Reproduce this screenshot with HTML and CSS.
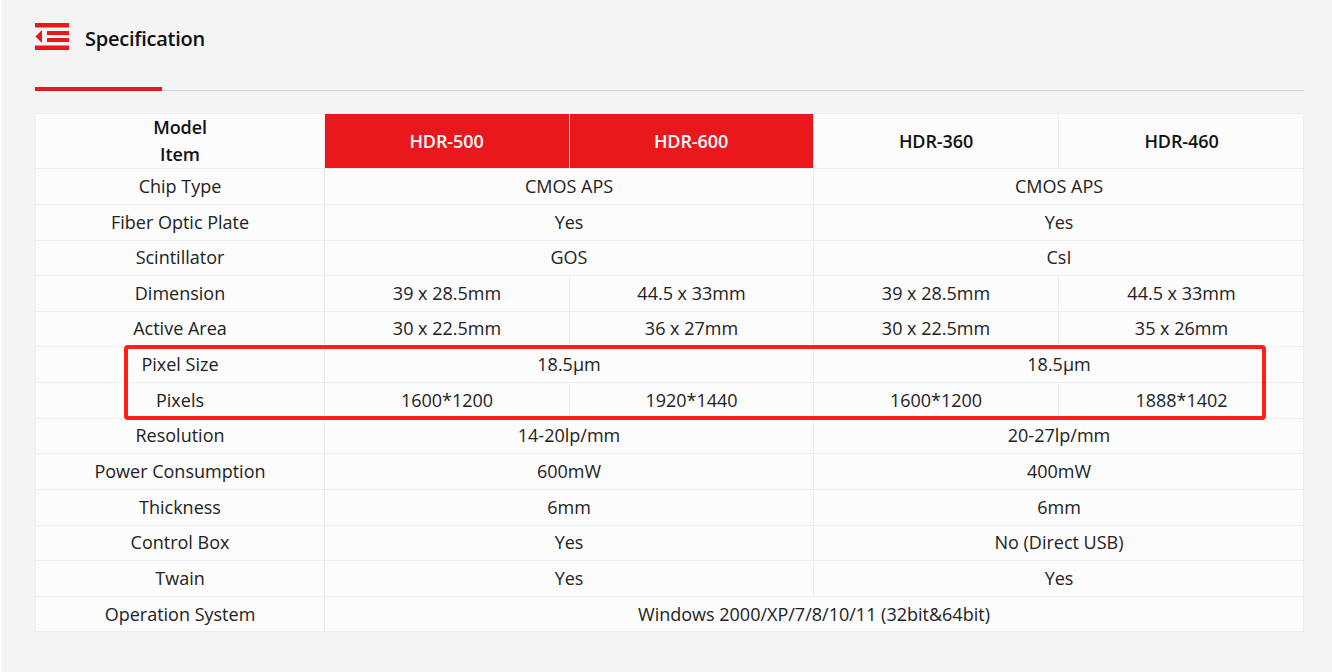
FILE: index.html
```html
<!DOCTYPE html>
<html lang="en">
<head>
<meta charset="utf-8">
<title>Specification</title>
<link rel="stylesheet" href="styles.css">
</head>
<body>
<main class="page">
  <header class="title">
    <svg class="title-icon" width="34" height="27" viewBox="0 0 34 27" aria-hidden="true">
      <rect x="0" y="0" width="34" height="4.5" fill="#ea171c"/>
      <rect x="12" y="8" width="22" height="4" fill="#ea171c"/>
      <rect x="12" y="15" width="22" height="4" fill="#ea171c"/>
      <rect x="0" y="22.5" width="34" height="4.5" fill="#ea171c"/>
      <path d="M0.5 13.5 7 7V20Z" fill="#ea171c"/>
    </svg>
    <h2 class="title-text">Specification</h2>
  </header>
  <div class="rule"><span class="rule-accent"></span></div>
  <div class="table-wrap">
    <table class="spec">
      <colgroup><col class="c0"><col class="c1"><col class="c2"><col class="c3"><col class="c4"></colgroup>
      <tr class="head">
        <th>Model<br>Item</th>
        <th class="hot">HDR-500</th>
        <th class="hot">HDR-600</th>
        <th>HDR-360</th>
        <th>HDR-460</th>
      </tr>
      <tr><td>Chip Type</td><td colspan="2">CMOS APS</td><td colspan="2">CMOS APS</td></tr>
      <tr><td>Fiber Optic Plate</td><td colspan="2">Yes</td><td colspan="2">Yes</td></tr>
      <tr class="short"><td>Scintillator</td><td colspan="2">GOS</td><td colspan="2">CsI</td></tr>
      <tr><td>Dimension</td><td>39 x 28.5mm</td><td>44.5 x 33mm</td><td>39 x 28.5mm</td><td>44.5 x 33mm</td></tr>
      <tr class="short"><td>Active Area</td><td>30 x 22.5mm</td><td>36 x 27mm</td><td>30 x 22.5mm</td><td>35 x 26mm</td></tr>
      <tr><td>Pixel Size</td><td colspan="2">18.5μm</td><td colspan="2">18.5μm</td></tr>
      <tr><td>Pixels</td><td>1600*1200</td><td>1920*1440</td><td>1600*1200</td><td>1888*1402</td></tr>
      <tr class="short"><td>Resolution</td><td colspan="2">14-20lp/mm</td><td colspan="2">20-27lp/mm</td></tr>
      <tr><td>Power Consumption</td><td colspan="2">600mW</td><td colspan="2">400mW</td></tr>
      <tr><td>Thickness</td><td colspan="2">6mm</td><td colspan="2">6mm</td></tr>
      <tr class="short"><td>Control Box</td><td colspan="2">Yes</td><td colspan="2">No (Direct USB)</td></tr>
      <tr><td>Twain</td><td colspan="2">Yes</td><td colspan="2">Yes</td></tr>
      <tr class="last"><td>Operation System</td><td colspan="4">Windows 2000/XP/7/8/10/11 (32bit&amp;64bit)</td></tr>
    </table>
    <div class="callout"></div>
  </div>
</main>
</body>
</html>
```
FILE: styles.css
```css
* { box-sizing: border-box; }
html, body { margin: 0; height: 100%; }
body {
  background: #fff;
  font-family: "Open Sans", "Noto Sans", sans-serif;
  color: #222;
  overflow: hidden;
}
.page {
  margin-left: 1px;
  height: 672px;
  background: #f4f4f4;
  padding: 23px 28px 0 34px;
}
.title {
  display: flex;
  align-items: flex-start;
  height: 67px;
}
.title-icon { flex: none; }
.title-text {
  margin: 0 0 0 16px;
  font-size: 20px;
  font-weight: 600;
  letter-spacing: -0.25px;
  line-height: 32px;
  color: #111;
}
.rule {
  height: 1px;
  background: #cfcfcf;
  position: relative;
}
.rule-accent {
  position: absolute;
  left: 0;
  bottom: 0;
  width: 127px;
  height: 4px;
  background: #ea171c;
}
.table-wrap {
  position: relative;
  margin-top: 22px;
}
.spec {
  width: 1268px;
  table-layout: fixed;
  border-collapse: collapse;
  background: #fcfcfc;
  border: 1px solid #e2e2e2;
  font-size: 18px;
}
.c0 { width: 289px; }
.c1 { width: 245px; }
.c2 { width: 244px; }
.c3 { width: 245px; }
.c4 { width: 245px; }
.spec th, .spec td {
  padding: 0;
  text-align: center;
  border: 1px solid #eeeeee;
  font-weight: 400;
  line-height: 27px;
  height: 36px;
}
.spec td:last-child { padding-left: 1px; }
.spec tr.short td {
  height: 35px;
  padding-bottom: 1px;
}
.spec tr.last td {
  height: 35px;
  padding-left: 0;
}
.spec tr.head th {
  height: 55px;
  font-weight: 600;
  letter-spacing: -0.1px;
  color: #111;
}
.spec tr.head th:last-child { padding-left: 1px; }
.spec tr.head th.hot {
  background: #ea171c;
  color: #fff;
  padding-right: 1px;
}
.callout {
  position: absolute;
  left: 89px;
  top: 232px;
  width: 1142px;
  height: 75px;
  border: 4px solid #ff1f14;
  border-radius: 4px;
  pointer-events: none;
}
```
